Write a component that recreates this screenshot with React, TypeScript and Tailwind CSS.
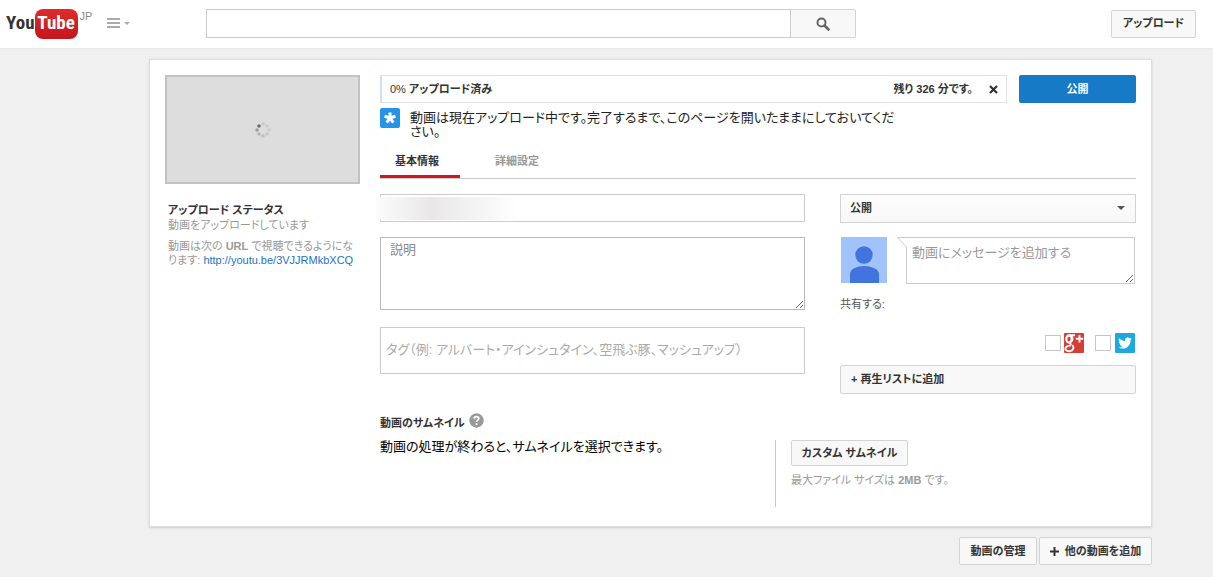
import { useState } from 'react';
import type { ReactNode } from 'react';

function Button({ children, className = '' }: { children: ReactNode; className?: string }) {
  return (
    <button
      type="button"
      className={`border border-[#d3d3d3] rounded-xs bg-[#f8f8f8] text-[11px] font-bold text-[#333] whitespace-nowrap hover:bg-[#f0f0f0] ${className}`}
    >
      {children}
    </button>
  );
}

function Logo() {
  return (
    <a href="#" aria-label="YouTube JP" className="flex items-start w-[88px]">
      <span className="flex items-center h-[30px] font-['Roboto_Condensed','Open_Sans_Condensed','Roboto',sans-serif] text-[19px] font-bold text-[#333]">
        You
        <span className="flex items-center justify-center w-[43px] h-[30px] rounded-lg bg-linear-to-b from-[#e02a2a] to-[#c4161c] text-white">
          Tube
        </span>
      </span>
      <span className="text-[11px] leading-[14px] text-[#888] ml-0.5">JP</span>
    </a>
  );
}

function Spinner() {
  const dots = [
    [8, 2, '#c9c9c9'], [12, 4, '#cccccc'], [14, 8, '#cccccc'], [12, 12, '#c8c8c8'],
    [8, 14, '#c0c0c0'], [4, 12, '#b8b8b8'], [2, 8, '#a0a0a0'], [4, 4, '#6e6e6e'],
  ] as const;
  return (
    <svg width="16" height="16" viewBox="0 0 16 16">
      {dots.map(([x, y, fill]) => <circle key={`${x}-${y}`} cx={x} cy={y} r="1.8" fill={fill} />)}
    </svg>
  );
}

function Header() {
  return (
    <header className="flex items-center h-[49px] pb-px pl-1.5 pr-[17px] bg-white border-b border-[#e8e8e8]">
      <Logo />
      <button type="button" aria-label="ガイド" className="flex items-center gap-1 ml-[13px]">
        <svg width="13" height="11" viewBox="0 0 13 11" fill="#aaa">
          <rect width="13" height="2" y="0" />
          <rect width="13" height="2" y="4" />
          <rect width="13" height="2" y="8" />
        </svg>
        <svg width="6" height="4" viewBox="0 0 6 4"><path d="M0 0h6L3 3z" fill="#aaa" /></svg>
      </button>
      <form className="flex flex-1 max-w-[650px] ml-[76px]" onSubmit={(e) => e.preventDefault()}>
        <input type="text" aria-label="検索" className="flex-1 min-w-0 h-[29px] px-2 border border-[#ccc] text-sm outline-none" />
        <button type="submit" aria-label="検索" className="flex items-center justify-center w-[65px] border border-l-0 border-[#d3d3d3] rounded-r-xs bg-[#f8f8f8]">
          <svg width="14" height="14" viewBox="0 0 14 14" fill="none" stroke="#666">
            <circle cx="5.5" cy="5.5" r="4" strokeWidth="2" />
            <path d="M8.5 8.5l4 4" strokeWidth="2.6" strokeLinecap="round" />
          </svg>
        </button>
      </form>
      <Button className="ml-auto w-[85px] h-7">アップロード</Button>
    </header>
  );
}

function Sidebar() {
  return (
    <aside className="w-[195px] shrink-0">
      <div className="flex items-center justify-center h-[109px] border-2 border-[#c2c2c2] bg-[#ddd]">
        <Spinner />
      </div>
      <div className="pl-[3px] pt-[19px] text-[11px] leading-[15px] text-[#999]">
        <h2 className="font-bold text-[#333]">アップロード ステータス</h2>
        <p>動画をアップロードしています</p>
        <p className="mt-1.5 leading-[14px]">
          動画は次の <b>URL</b> で視聴できるようにな<br />
          ります: <a href="#" className="text-[#2272c8]">http://youtu.be/3VJJRMkbXCQ</a>
        </p>
      </div>
    </aside>
  );
}

function UploadProgress() {
  return (
    <>
      <div className="flex gap-3">
        <div className="flex flex-1 items-center h-7 pl-2 pr-2 border border-[#e2e2e2] border-l-2 border-l-[#cfe2f5] text-[11px] font-bold text-[#333]">
          <span><span className="font-normal">0%</span> アップロード済み</span>
          <span className="ml-auto">残り 326 分です。</span>
          <button type="button" aria-label="キャンセル" className="ml-4">
            <svg width="9" height="9" viewBox="0 0 9 9" stroke="#333" strokeWidth="2.2"><path d="M1 1l7 7M8 1l-7 7" /></svg>
          </button>
        </div>
        <button type="button" className="w-[117px] h-7 rounded-xs bg-[#167ac6] text-[11px] font-bold text-white">公開</button>
      </div>
      <div className="flex items-start gap-2.5 mt-[5px]">
        <span className="flex items-center justify-center size-5 shrink-0 rounded-xs bg-[#2793e6]">
          <svg width="12" height="12" viewBox="0 0 12 12" fill="none" stroke="white" strokeWidth="3">
            <path d="M6 6V.5M6 6L.6 4.300M6 6l5.400-1.700M6 6l-3.300 4.700M6 6l3.300 4.700" />
          </svg>
        </span>
        <p className="pt-[3px] text-[13px] leading-[14px] text-[#222]">
          動画は現在アップロード中です。完了するまで、このページを開いたままにしておいてくだ<br />さい。
        </p>
      </div>
    </>
  );
}

function Tabs() {
  const [tab, setTab] = useState('basic');
  const tabs = [
    { id: 'basic', label: '基本情報' },
    { id: 'advanced', label: '詳細設定' },
  ];
  return (
    <div className="flex gap-5 mt-1 border-b border-[#ccc]">
      {tabs.map((t) => (
        <button
          key={t.id}
          type="button"
          onClick={() => setTab(t.id)}
          className={`w-20 h-[35px] pt-1 pr-1.5 border-b-3 text-[11px] font-bold ${tab === t.id ? 'border-[#cc181e] text-[#333]' : 'border-transparent text-[#999]'}`}
        >
          {t.label}
        </button>
      ))}
    </div>
  );
}

function Details() {
  return (
    <div className="flex-1 min-w-0">
      <div className="relative">
        <input type="text" aria-label="タイトル" className="block w-full h-7 px-2 border border-[#ccc] text-[13px] outline-none" />
        <div className="absolute -left-1 top-[3px] w-[158px] h-[23px] bg-linear-to-r from-[#fcfcfc] via-[#e9e7e7] via-35% to-white to-90%" />
      </div>
      <textarea
        aria-label="説明"
        placeholder="説明"
        className="block w-full h-[73px] mt-[15px] px-[9px] py-[3px] border border-[#b8b8b8] text-[13px] leading-[18px] placeholder:text-[#888] outline-none"
      />
      <input
        type="text"
        aria-label="タグ"
        placeholder="タグ（例: アルバート・アインシュタイン、空飛ぶ豚、マッシュアップ）"
        className="block w-full h-[47px] mt-[17px] px-[5px] pb-0.5 border border-[#ccc] text-[13px] placeholder:text-[#aaa] outline-none"
      />
    </div>
  );
}

function Sharing() {
  return (
    <div className="w-[296px] shrink-0">
      <div className="relative">
        <select
          aria-label="プライバシー"
          className="block w-full h-[29px] px-[9px] appearance-none border border-[#d3d3d3] bg-linear-to-b from-[#fcfcfc] to-[#f8f8f8] text-[11px] font-bold text-[#333]"
        >
          <option>公開</option>
          <option>限定公開</option>
          <option>非公開</option>
        </select>
        <svg width="8" height="4" viewBox="0 0 8 4" className="absolute right-[11px] top-3 pointer-events-none"><path d="M0 0h8L4 4z" fill="#555" /></svg>
      </div>
      <div className="flex justify-between mt-3.5 px-px">
        <svg width="46" height="46" viewBox="0 0 46 46">
          <rect width="46" height="46" fill="#a1c2fa" />
          <circle cx="23" cy="18" r="8.7" fill="#4274df" />
          <path d="M9 46V37c0-5 7-8 14-8s15 3 15 8v9z" fill="#4274df" />
        </svg>
        <div className="relative">
          <textarea
            aria-label="メッセージ"
            placeholder="動画にメッセージを追加する"
            className="block w-[229px] h-[47px] px-[5px] py-1.5 border border-[#ccc] text-[13px] leading-[18px] placeholder:text-[#999] outline-none"
          />
          <svg width="11" height="11" viewBox="0 0 11 11" className="absolute -left-[9px] top-0">
            <path d="M0 .5h11V10H9.500z" fill="white" />
            <path d="M11 .5H.5l9 9.500V11" fill="none" stroke="#ccc" />
          </svg>
        </div>
      </div>
      <p className="mt-[13px] text-[11px] leading-[15px] text-[#555]">共有する:</p>
      <div className="flex items-center justify-end gap-[11px] mt-[21px] pr-px">
        <label className="flex items-center gap-[3px]">
          <input type="checkbox" aria-label="Google+" className="size-4 appearance-none border border-[#c6c6c6] bg-white checked:bg-[#ddd]" />
          <svg width="20" height="20" viewBox="0 0 20 20" fill="none" stroke="white">
            <rect width="20" height="20" rx="1" fill="#d73d32" stroke="none" />
            <ellipse cx="5" cy="6" rx="2.700" ry="3.600" strokeWidth="2.200" />
            <path d="M5 2.200h6M7.500 3.500c1.800 2 1.200 4-.8 5.300-1.600 1.200-.6 2 .8 3" strokeWidth="1.900" />
            <path d="M8.300 12c2.600 3 .2 6.200-3 6.200S.6 16.500 1.800 14.500c1-1.600 3-1.900 5-1.900" strokeWidth="1.900" />
            <path d="M15.500 2v7.500M11.800 5.700h7.400" strokeWidth="1.900" />
          </svg>
        </label>
        <label className="flex items-center gap-1">
          <input type="checkbox" aria-label="Twitter" className="size-4 appearance-none border border-[#c6c6c6] bg-white checked:bg-[#ddd]" />
          <svg width="20" height="20" viewBox="0 0 20 20">
            <rect width="20" height="20" rx="1" fill="#1da8e0" />
            <g transform="translate(3.200 3.200) scale(.57)">
              <path fill="white" d="M23.950 4.570a10 10 0 01-2.820.770 4.960 4.960 0 002.160-2.720c-.95.560-2 .960-3.130 1.190a4.920 4.920 0 00-8.380 4.480C7.690 8.100 4.070 6.130 1.640 3.160a4.900 4.900 0 001.520 6.570 4.900 4.900 0 01-2.230-.61v.06a4.920 4.920 0 003.950 4.830 5 5 0 01-2.210.08 4.940 4.940 0 004.600 3.420A9.870 9.870 0 010 19.540a14 14 0 007.550 2.210c9.050 0 14-7.500 14-13.980 0-.21 0-.42-.02-.63a9.940 9.940 0 002.420-2.570z" />
            </g>
          </svg>
        </label>
      </div>
      <Button className="w-full h-[29px] mt-3 px-2.5 text-left">+ 再生リストに追加</Button>
    </div>
  );
}

function Thumbnails() {
  return (
    <section className="flex mt-[19px]">
      <div className="flex-1">
        <h2 className="flex items-center gap-1 text-[11px] leading-[18px] font-bold text-[#333]">
          動画のサムネイル
          <svg width="15" height="15" viewBox="0 0 15 15" className="mb-1">
            <circle cx="7.500" cy="7.500" r="7.200" fill="#999" />
            <path d="M5.200 5.800c0-3 4.600-2.800 4.600-.3 0 1.700-2.300 1.600-2.300 3.500M7.500 10.200v1.800" fill="none" stroke="white" strokeWidth="1.800" />
          </svg>
        </h2>
        <p className="mt-1.5 text-[13px] leading-[18px] text-black">動画の処理が終わると、サムネイルを選択できます。</p>
      </div>
      <div className="w-[361px] h-[67px] mt-[27px] pl-[15px] border-l border-[#ccc]">
        <Button className="block w-[117px] h-[26px]">カスタム サムネイル</Button>
        <p className="mt-[7px] text-[11px] leading-[15px] text-[#999]">最大ファイル サイズは <b>2MB</b> です。</p>
      </div>
    </section>
  );
}

export default function App() {
  return (
    <div className="min-h-screen bg-[#f0f0f0] font-['Liberation_Sans','Noto_Sans_CJK_JP',sans-serif] [font-feature-settings:'palt']">
      <Header />
      <div className="ml-[149px] mr-[61px] pt-2.5 pb-3">
        <main className="flex gap-5 p-[15px] pb-[19px] bg-white border border-[#ddd] shadow-sm">
          <Sidebar />
          <div className="flex-1 min-w-0">
            <UploadProgress />
            <Tabs />
            <div className="flex gap-[35px] mt-[15px]">
              <Details />
              <Sharing />
            </div>
            <Thumbnails />
          </div>
        </main>
        <footer className="flex justify-end gap-0.5 mt-2.5">
          <Button className="w-[78px] h-7">動画の管理</Button>
          <Button className="w-[113px] h-7">
            <span className="flex items-center justify-center gap-1.5">
              <svg width="9" height="9" viewBox="0 0 9 9" stroke="#333" strokeWidth="2"><path d="M4.500 0v9M0 4.500h9" /></svg>
              他の動画を追加
            </span>
          </Button>
        </footer>
      </div>
    </div>
  );
}
